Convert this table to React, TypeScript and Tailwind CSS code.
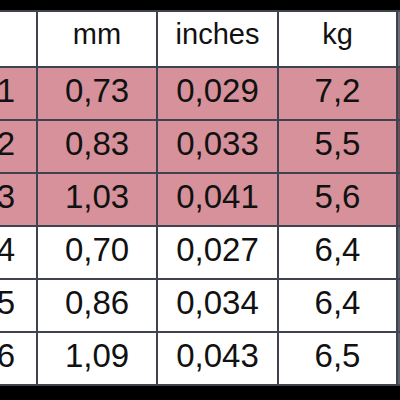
import React from "react";

type Row = { id: string; mm: string; inches: string; kg: string; pink: boolean };

const rows: Row[] = [
  { id: "1", mm: "0,73", inches: "0,029", kg: "7,2", pink: true },
  { id: "2", mm: "0,83", inches: "0,033", kg: "5,5", pink: true },
  { id: "3", mm: "1,03", inches: "0,041", kg: "5,6", pink: true },
  { id: "4", mm: "0,70", inches: "0,027", kg: "6,4", pink: false },
  { id: "5", mm: "0,86", inches: "0,034", kg: "6,4", pink: false },
  { id: "6", mm: "1,09", inches: "0,043", kg: "6,5", pink: false },
];

export default function App() {
  return (
    <div className="w-[400px] h-[400px] bg-black overflow-hidden pt-[10px] font-['Liberation_Sans',Arial,sans-serif] text-[#111]">
      <div className="grid grid-cols-[36px_118px_119px_117px_2px] grid-rows-[54px_repeat(6,51px)] gap-[2px] py-[2px] bg-[#3f4350]">
        <div className="bg-white" />
        <div className="bg-white flex items-center justify-center text-[29px] leading-none pb-[9px]">mm</div>
        <div className="bg-white flex items-center justify-center text-[29px] leading-none pb-[9px]">inches</div>
        <div className="bg-white flex items-center justify-center text-[29px] leading-none pb-[9px]">kg</div>
        <div className="bg-[#6b6e78]" />
        {rows.map((r) => {
          const bg = r.pink ? "bg-[#d6919b]" : "bg-white";
          return (
            <React.Fragment key={r.id}>
              <div className={`${bg} flex items-center justify-end pr-[21px] pb-[6px] text-[33px] leading-none overflow-hidden`}>
                {r.id}
              </div>
              <div className={`${bg} flex items-center justify-center pb-[6px] text-[33px] leading-none`}>{r.mm}</div>
              <div className={`${bg} flex items-center justify-center pb-[6px] text-[33px] leading-none`}>{r.inches}</div>
              <div className={`${bg} flex items-center justify-center pb-[6px] text-[33px] leading-none`}>{r.kg}</div>
              <div className={r.pink ? "bg-[#6b4a52]" : "bg-[#5c606a]"} />
            </React.Fragment>
          );
        })}
      </div>
    </div>
  );
}
